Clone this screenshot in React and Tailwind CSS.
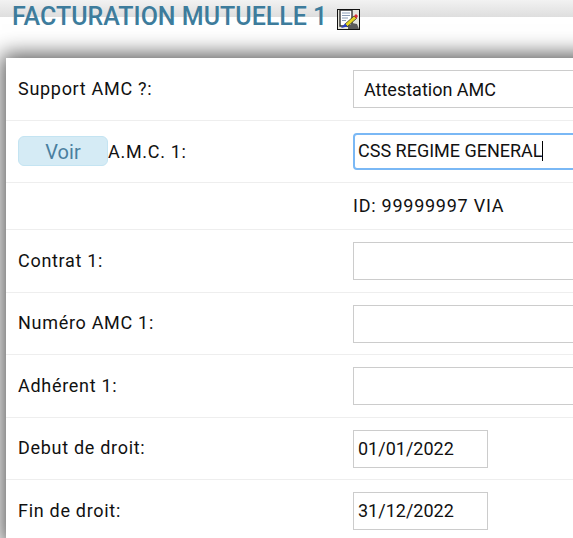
const rows = [
  { label: 'Support AMC ?:', h: 'h-[63px]', field: 'select' },
  { label: 'A.M.C. 1:', h: 'h-[62px]', field: 'focus', voir: true },
  { h: 'h-[47px]', field: 'id' },
  { label: 'Contrat 1:', h: 'h-[63px]', field: 'text' },
  { label: 'Numéro AMC 1:', h: 'h-[62px]', field: 'text' },
  { label: 'Adhérent 1:', h: 'h-[63px]', field: 'text' },
  { label: 'Debut de droit:', h: 'h-[62px]', field: 'date', value: '01/01/2022', pad: 'pb-[1px]' },
  { label: 'Fin de droit:', h: 'h-[62px]', field: 'date', value: '31/12/2022', labelPad: 'pb-0' },
]

function EditIcon() {
  return (
    <svg width="23" height="21" viewBox="0 0 23 21" className="shrink-0">
      <rect width="23" height="21" fill="#e6e6de" />
      <path d="M3 1h12v16H3z" fill="#fff" stroke="#333" strokeWidth="1.4" />
      <path d="M5 4h8M5 6.5h8M5 9h6M5 11.5h4" stroke="#8a9bb5" strokeWidth="1.1" />
      <path d="M11 18l4-4 5 1 2 5H11z" fill="#5a5a5a" />
      <path d="M8 15l9-8 2.5 2.5-9 8z" fill="#e4d422" stroke="#222" strokeWidth="0.7" />
      <path d="M4 19l4-4.5 2.5 3z" fill="#2a3fc4" />
      <path d="M17 7l2-2 2 2-1.500 2.500z" fill="#d8303a" />
      <path d="M0 20.500h23M22.500 0v21M0 0.500h23M0.500 0v21" stroke="#111" strokeWidth="1" />
    </svg>
  )
}

function Field({ row }) {
  if (row.field === 'id') return <span className="pb-[2px] text-[18px] tracking-[0.75px]">ID: 99999997 VIA</span>
  if (row.field === 'select') {
    return (
      <div className="flex h-[38px] w-[400px] items-center border border-[#ccc] pl-[10px] text-[18px]">
        Attestation AMC
      </div>
    )
  }
  if (row.field === 'focus') {
    return (
      <div className="-mt-[1px] flex h-[37px] w-[400px] items-center rounded-[4px] border-2 border-[#7ab8f5] pb-[1px] pl-[3px] text-[18px]">
        <span>CSS REGIME GENERAL</span>
        <span className="-ml-px h-[20px] w-px bg-black" />
      </div>
    )
  }
  if (row.field === 'date') {
    return (
      <div className={`flex h-[38px] w-[135px] items-center border border-[#ccc] pl-[4px] text-[18px] ${row.pad ?? ''}`}>
        {row.value}
      </div>
    )
  }
  return <div className="h-[38px] w-[400px] border border-[#ccc]" />
}

export default function App() {
  return (
    <div className="h-[538px] w-[573px] overflow-hidden bg-white font-['Roboto',sans-serif] text-[#111]">
      <div className="h-[17px] bg-gradient-to-b from-[#f2f2f2] to-[#dedede]" />
      <div className="-mt-[17px] flex h-[58px] items-start pl-[12px] pt-[2px]">
        <h1 className="relative text-[25px] leading-[30px] font-medium text-[#3d7c9c]">
          FACTURATION MUTUELLE 1
        </h1>
        <div className="relative mt-[7px] ml-[10px]">
          <EditIcon />
        </div>
      </div>
      <div className="ml-[6px] w-[800px] bg-white shadow-[0_0_20px_4px_rgba(0,0,0,0.65)]">
        {rows.map((row, i) => (
          <div
            key={i}
            className={`flex items-center border-b border-[#eeeeee] pl-[12px] ${row.h}`}
          >
            {row.voir ? (
              <div className="flex w-[335px] items-center text-[18px] tracking-[0.7px]">
                <button className="-mt-[1px] h-[30px] w-[90px] rounded-[6px] border border-[#c4e4f2] bg-[#d5ebf5] text-[20px] tracking-normal text-[#4a7f9f]">
                  Voir
                </button>
                {row.label}
              </div>
            ) : (
              <div className={`w-[335px] text-[18px] tracking-[0.7px] ${row.labelPad ?? 'pb-[2px]'}`}>{row.label}</div>
            )}
            <Field row={row} />
          </div>
        ))}
      </div>
    </div>
  )
}
